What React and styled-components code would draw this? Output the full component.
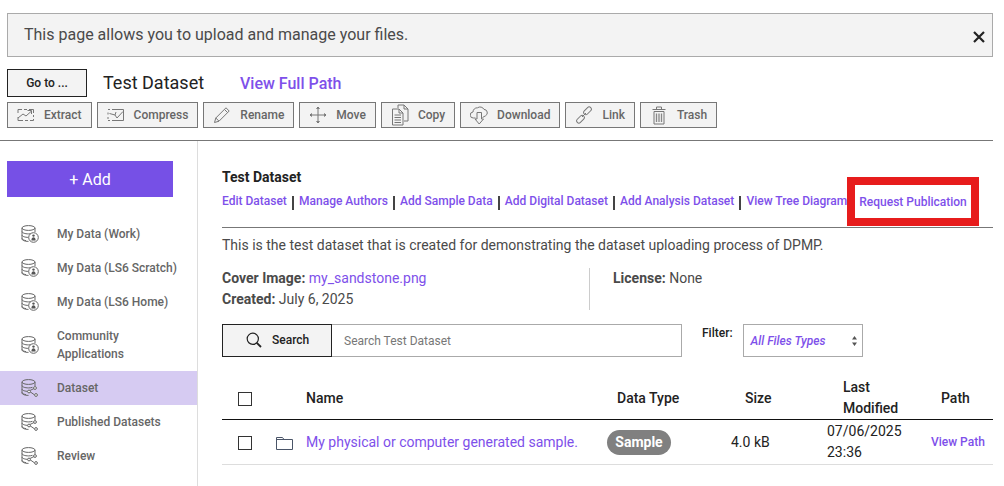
import React from "react";
import styled, { createGlobalStyle } from "styled-components";

const GlobalStyle = createGlobalStyle`
  body {
    margin: 0;
    background: #fff;
    font-family: Roboto, "Liberation Sans", sans-serif;
    color: #444;
  }
`;

const purple = "#7e50ea";

const Svg = ({ w = 18, h = 18, box = "0 0 18 18", color = "#777", sw = 1, children }) => (
  <svg width={w} height={h} viewBox={box} fill="none" stroke={color} strokeWidth={sw} style={{ flex: "none", display: "block" }}>
    {children}
  </svg>
);

const ExtractIcon = () => (
  <Svg>
    <path d="M1 7V3.5h4M7 3.5h3M12 3.5h4.5V7M16.5 9v2M16.5 13v1.5H13M11 14.5H8M6 14.5H1V11" />
    <path d="M1 12 6 8l3 2 5-4.5M10.5 4.5h4v3.5" />
  </Svg>
);

const CompressIcon = () => (
  <Svg>
    <path d="M1 3.5h2M1 6.5v2M1 11v2M1 14.5h2" />
    <path d="M5 3.5h11.5v11H5" />
    <path d="M2.5 7.5 8 9l2 3 6-6.5M9 6l-1 3" />
  </Svg>
);

const PencilIcon = () => (
  <Svg>
    <path d="M1.5 16.5 2.8 12 13 1.8 16.2 5 6 15.2Z" />
    <path d="M2.8 12 6 15.2M11.5 3.5l3 3" />
  </Svg>
);

const MoveIcon = () => (
  <Svg>
    <path d="M9 1v16M1 9h16" />
    <path d="M7.5 2.8 9 1l1.5 1.8M7.5 15.2 9 17l1.5-1.8M2.8 7.5 1 9l1.8 1.5M15.2 7.5 17 9l-1.8 1.5" fill="#777" />
  </Svg>
);

const CopyIcon = () => (
  <Svg h={22} box="0 0 18 22">
    <path d="M7 1h6l4 4v12h-4" />
    <path d="M13 1v4h4M7 1v3" />
    <path d="M1.5 5H8l4 4v12H1.5Z" />
    <path d="M8 5v4h4M3.5 11h6.5M3.5 13.5h6.5M3.5 16h6.5M3.5 18.5h6.5" />
  </Svg>
);

const CloudIcon = () => (
  <Svg h={20} box="0 0 18 20">
    <path d="M5.5 13H3.5a3 3 0 0 1-.5-6 4.2 4.2 0 0 1 4.5-4.2A4.4 4.4 0 0 1 14 4.4a3.4 3.4 0 0 1 1.5 6.4L12.5 12.5" />
    <path d="M7 7.5v6.5H5L9.2 19l4.3-5h-2V7.5Z" />
  </Svg>
);

const LinkIcon = () => (
  <Svg>
    <rect x="1" y="11" width="9" height="4.4" rx="2.2" transform="rotate(-45 5.5 13.2)" />
    <rect x="8" y="2.6" width="9" height="4.4" rx="2.2" transform="rotate(-45 12.5 4.8)" />
    <path d="M7 11 11 7" />
  </Svg>
);

const TrashIcon = () => (
  <Svg h={20} box="0 0 18 20">
    <path d="M2.5 4.5h13M6.5 4.5V2h5v2.5M4 6.5h10V19H4Z" />
    <path d="M6.5 8.5V17M9 8.5V17M11.5 8.5V17" stroke="#888" strokeWidth="1.3" />
  </Svg>
);

const DbBase = () => (
  <>
    <ellipse cx="7.5" cy="3" rx="6.5" ry="2.4" />
    <path d="M1 3v11c0 1.2 2.6 2.4 6.5 2.4M14 3v4M1 6.5c0 1.3 2.8 2.4 6.5 2.4 1.5 0 3-.2 4-.6M1 10c0 1.3 2.8 2.4 6.5 2.4M1 13.4c0 1 1.5 1.8 4 2.2" />
  </>
);

const DbUserIcon = () => (
  <Svg box="0 0 18 18" color="#666">
    <DbBase />
    <circle cx="12.5" cy="12.5" r="4.8" fill="#fff" />
    <circle cx="12.5" cy="10.6" r="1.2" fill="#555" stroke="none" />
    <path d="M10.4 15.4c0-4.2 4.2-4.2 4.2 0Z" fill="#555" stroke="none" />
  </Svg>
);

const DbShareIcon = () => (
  <Svg box="0 0 18 18" color="#666">
    <DbBase />
    <path d="M8 12 13 9.5M8 12l5 3.5" />
    <circle cx="8" cy="12.5" r="1.4" fill="#fff" />
    <circle cx="14" cy="9" r="1.4" fill="#fff" />
    <circle cx="15" cy="16" r="1.4" fill="#fff" />
  </Svg>
);

const SearchIcon = () => (
  <Svg w={16} h={16} box="0 0 16 16" color="#222" sw={1.2}>
    <circle cx="6.8" cy="6.8" r="5.6" />
    <path d="M10.8 10.8 15 15" strokeWidth="1.8" />
  </Svg>
);

const FolderIcon = () => (
  <Svg w={17} h={14} box="0 0 17 14" color="#4a5568">
    <path d="M.5 13.5V1.5h6l1.5 2h8.5v10Z" />
    <path d="M.5 3.5H8" />
  </Svg>
);

const Alert = styled.div`
  display: flex;
  align-items: center;
  justify-content: space-between;
  height: 40px;
  margin: 13px 11px 0 7px;
  padding: 0 7px 2px 16px;
  background: #f3f3f3;
  border: 1px solid #aaa;
  font-size: 16px;
  color: #4a4a4a;
`;

const CloseIcon = styled.svg`
  margin-top: 6px;
`;

const TitleRow = styled.div`
  display: flex;
  align-items: center;
  height: 28px;
  margin: 12px 0 0 7px;
`;

const GoTo = styled.button`
  width: 80px;
  height: 28px;
  margin-right: 16px;
  padding: 0;
  background: #f3f3f3;
  border: 1px solid #222;
  font: 500 12px Roboto, sans-serif;
  color: #222;
`;

const Title = styled.div`
  width: 137px;
  margin-top: -1px;
  font-size: 18px;
  color: #222;
`;

const FullPath = styled.a`
  font-size: 16px;
  font-weight: 500;
  color: ${purple};
`;

const Toolbar = styled.div`
  display: flex;
  gap: 5px;
  margin: 5px 0 0 7px;
  padding-bottom: 12px;
`;

const ToolButton = styled.button`
  display: flex;
  align-items: center;
  gap: 9px;
  height: 26px;
  padding: 0 9px;
  background: #f3f3f3;
  border: 1px solid #777;
  font: 500 12px Roboto, sans-serif;
  color: #666;
`;

const TopRule = styled.hr`
  margin: 0 11px 0 0;
  border: 0;
  border-top: 1px solid #777;
`;

const Body = styled.div`
  display: flex;
  height: 345px;
  overflow: hidden;
`;

const Sidebar = styled.nav`
  flex: none;
  width: 197px;
  border-right: 1px solid #ddd;
`;

const AddButton = styled.button`
  display: block;
  width: 166px;
  height: 36px;
  margin: 20px 0 20px 7px;
  padding: 0;
  background: #7650e6;
  border: 0;
  font: 400 16px Roboto, sans-serif;
  color: #fff;
`;

const NavItem = styled.div`
  display: flex;
  align-items: center;
  gap: 18px;
  padding: 8px 0 8px 21px;
  background: ${(p) => (p.$active ? "#d6cbf2" : "transparent")};
  font-size: 12px;
  font-weight: 500;
  line-height: 18px;
  color: #666;
`;

const NavLabel = styled.span`
  max-width: 125px;
`;

const Main = styled.main`
  flex: 1;
  min-width: 0;
  padding: 26px 11px 0 24px;
`;

const DatasetTitle = styled.div`
  font-size: 14px;
  font-weight: 700;
  line-height: 20px;
  color: #222;
`;

const LinkRow = styled.div`
  display: flex;
  align-items: center;
  height: 18px;
  margin-top: 5px;
  padding-bottom: 17px;
  border-bottom: 1px solid #777;
  white-space: nowrap;
`;

const ActionLink = styled.a`
  font-size: 12px;
  font-weight: 500;
  line-height: 18px;
  color: ${purple};
`;

const Sep = styled.span`
  width: 2px;
  height: 14px;
  margin: 3px 5.2px 0 5px;
  background: #444;
`;

const RequestLink = styled(ActionLink)`
  position: relative;
  top: 1px;
  margin-left: 12px;
`;

const Highlight = styled.span`
  position: absolute;
  top: -16px;
  left: -12px;
  right: -12px;
  bottom: -15px;
  border: 8px solid #e71c1c;
`;

const Description = styled.p`
  margin: 7px 0 0;
  font-size: 14px;
  line-height: 20px;
  color: #4a4a4a;
`;

const Meta = styled.div`
  display: flex;
  margin-top: 13px;
  font-size: 14px;
  line-height: 21px;
  color: #4a4a4a;
`;

const MetaLeft = styled.div`
  width: 367px;
  border-right: 1px solid #ccc;
`;

const MetaRight = styled.div`
  padding-left: 23px;
`;

const InlineLink = styled.a`
  color: ${purple};
`;

const SearchRow = styled.div`
  display: flex;
  margin-top: 14px;
`;

const SearchButton = styled.button`
  display: flex;
  align-items: center;
  gap: 10px;
  flex: none;
  width: 110px;
  height: 33px;
  padding: 0 0 2px 23px;
  background: #f3f3f3;
  border: 1px solid #222;
  font: 500 12px Roboto, sans-serif;
  color: #222;
`;

const SearchInput = styled.input`
  box-sizing: border-box;
  width: 350px;
  height: 33px;
  padding: 0 12px;
  border: 1px solid #aaa;
  border-left: 0;
  outline: none;
  font: 400 12px Roboto, sans-serif;

  &::placeholder {
    color: #777;
    opacity: 1;
  }
`;

const FilterLabel = styled.label`
  margin: 2px 10px 0 20px;
  font-size: 12px;
  font-weight: 500;
  line-height: 14px;
  color: #222;
`;

const SelectBox = styled.div`
  box-sizing: border-box;
  display: flex;
  align-items: center;
  justify-content: space-between;
  width: 120px;
  height: 33px;
  padding: 0 5px 0 7px;
  border: 1px solid #aaa;
  font-size: 12px;
  font-style: italic;
  font-weight: 500;
  color: ${purple};
`;

const TableRow = styled.div`
  display: grid;
  grid-template-columns: 54px 30px 301px 124px 96px 104px 62px;
  align-items: center;
  font-size: 14px;
  line-height: 21px;
  color: #222;
  border-bottom: 1px solid ${(p) => (p.$head ? "#111" : "#ddd")};
`;

const HeaderRow = styled(TableRow)`
  margin-top: 20px;
  font-weight: 500;
`;

const DataRow = styled(TableRow)`
  padding: 1px 0;
`;

const Cell = styled.div`
  padding-left: ${(p) => p.$pad || 0}px;
`;

const Check = styled.span`
  display: block;
  box-sizing: border-box;
  width: 14px;
  height: 14px;
  margin: 1px 0 0 16px;
  border: 1px solid #333;
  background: #fff;
`;

const FolderCell = styled(Cell)`
  padding-top: 1px;
`;

const Pill = styled.span`
  display: block;
  width: 64px;
  height: 25px;
  border-radius: 13px;
  background: #808080;
  font-weight: 700;
  line-height: 25px;
  text-align: center;
  color: #fff;
`;

const SmallLink = styled.a`
  font-size: 12px;
  font-weight: 500;
  color: ${purple};
`;

const tools = [
  ["Extract", <ExtractIcon key="i" />],
  ["Compress", <CompressIcon key="i" />],
  ["Rename", <PencilIcon key="i" />],
  ["Move", <MoveIcon key="i" />],
  ["Copy", <CopyIcon key="i" />],
  ["Download", <CloudIcon key="i" />],
  ["Link", <LinkIcon key="i" />],
  ["Trash", <TrashIcon key="i" />],
];

const navItems = [
  { label: "My Data (Work)", icon: <DbUserIcon /> },
  { label: "My Data (LS6 Scratch)", icon: <DbUserIcon /> },
  { label: "My Data (LS6 Home)", icon: <DbUserIcon /> },
  { label: "Community Applications", icon: <DbUserIcon /> },
  { label: "Dataset", icon: <DbShareIcon />, active: true },
  { label: "Published Datasets", icon: <DbShareIcon /> },
  { label: "Review", icon: <DbShareIcon /> },
];

const actions = [
  "Edit Dataset",
  "Manage Authors",
  "Add Sample Data",
  "Add Digital Dataset",
  "Add Analysis Dataset",
];

const App = () => {
  return (
    <>
      <GlobalStyle />
      <Alert>
        This page allows you to upload and manage your files.
        <CloseIcon width="12" height="12" viewBox="0 0 12 12" stroke="#222" strokeWidth="2.2">
          <path d="M1 1 11 11M11 1 1 11" />
        </CloseIcon>
      </Alert>
      <TitleRow>
        <GoTo>Go to ...</GoTo>
        <Title>Test Dataset</Title>
        <FullPath>View Full Path</FullPath>
      </TitleRow>
      <Toolbar>
        {tools.map(([label, icon]) => (
          <ToolButton key={label}>
            {icon}
            {label}
          </ToolButton>
        ))}
      </Toolbar>
      <TopRule />
      <Body>
        <Sidebar>
          <AddButton>+ Add</AddButton>
          {navItems.map((item) => (
            <NavItem key={item.label} $active={item.active}>
              {item.icon}
              <NavLabel>{item.label}</NavLabel>
            </NavItem>
          ))}
        </Sidebar>
        <Main>
          <DatasetTitle>Test Dataset</DatasetTitle>
          <LinkRow>
            {actions.map((label) => (
              <React.Fragment key={label}>
                <ActionLink>{label}</ActionLink>
                <Sep />
              </React.Fragment>
            ))}
            <ActionLink>View Tree Diagram</ActionLink>
            <RequestLink>
              Request Publication
              <Highlight />
            </RequestLink>
          </LinkRow>
          <Description>
            This is the test dataset that is created for demonstrating the dataset uploading process of DPMP.
          </Description>
          <Meta>
            <MetaLeft>
              <div>
                <b>Cover Image:</b> <InlineLink>my_sandstone.png</InlineLink>
              </div>
              <div>
                <b>Created:</b> July 6, 2025
              </div>
            </MetaLeft>
            <MetaRight>
              <b>License:</b> None
            </MetaRight>
          </Meta>
          <SearchRow>
            <SearchButton>
              <SearchIcon />
              Search
            </SearchButton>
            <SearchInput placeholder="Search Test Dataset" />
            <FilterLabel>Filter:</FilterLabel>
            <SelectBox>
              All Files Types
              <svg width="5" height="10" viewBox="0 0 5 10" fill="#555">
                <path d="M2.5 0 5 3.5H0ZM2.5 10 0 6.5H5Z" />
              </svg>
            </SelectBox>
          </SearchRow>
          <HeaderRow $head>
            <Cell>
              <Check />
            </Cell>
            <Cell />
            <Cell>Name</Cell>
            <Cell $pad={10}>Data Type</Cell>
            <Cell $pad={14}>Size</Cell>
            <Cell $pad={16}>
              Last
              <br />
              Modified
            </Cell>
            <Cell $pad={10}>Path</Cell>
          </HeaderRow>
          <DataRow>
            <Cell>
              <Check />
            </Cell>
            <FolderCell>
              <FolderIcon />
            </FolderCell>
            <Cell>
              <InlineLink>My physical or computer generated sample.</InlineLink>
            </Cell>
            <Cell>
              <Pill>Sample</Pill>
            </Cell>
            <Cell>4.0 kB</Cell>
            <Cell>07/06/2025 23:36</Cell>
            <Cell>
              <SmallLink>View Path</SmallLink>
            </Cell>
          </DataRow>
        </Main>
      </Body>
    </>
  );
};

export default App;
